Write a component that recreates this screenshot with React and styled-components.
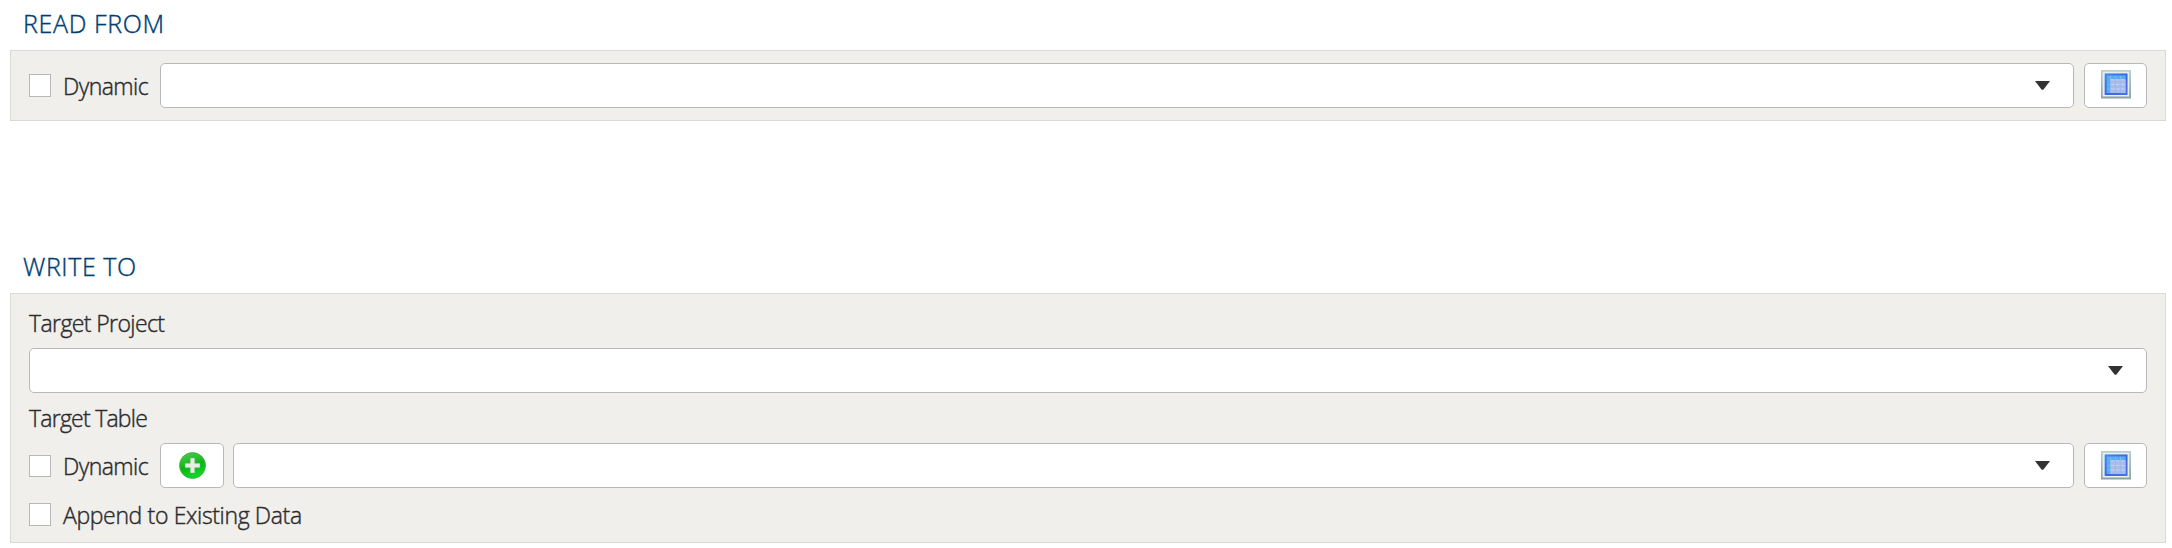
import React from "react";
import styled, { createGlobalStyle } from "styled-components";

const GlobalStyle = createGlobalStyle`
  * { box-sizing: border-box; }
  body { margin: 0; background: #fff; }
`;

const Page = styled.main`
  display: flex;
  flex-direction: column;
  width: 2172px;
  height: 548px;
  padding: 0 6px 0 10px;
  font-family: "Segoe UI", "Open Sans", "Noto Sans", sans-serif;
  font-weight: 300;
  -webkit-text-stroke-width: 0.4px;
  color: #2b2b2b;
`;

const Section = styled.section`
  display: flex;
  flex-direction: column;
  & + & { margin-top: 122px; }
`;

const Heading = styled.h2`
  height: 50px;
  margin: 0;
  padding-left: ${(p) => p.$indent}px;
  font-size: 25px;
  font-weight: 300;
  line-height: 46px;
  letter-spacing: ${(p) => p.$tracking}px;
  color: #003e73;
`;

const Panel = styled.div`
  display: flex;
  flex-direction: column;
  height: ${(p) => p.$height}px;
  padding: 12px 18px 0;
  border: 1px solid #d9d9d9;
  background: #f0efeb;
`;

const FieldLabel = styled.div`
  flex: none;
  height: ${(p) => p.$height}px;
  font-size: 23px;
  line-height: ${(p) => p.$line}px;
  letter-spacing: ${(p) => p.$tracking}px;
`;

const Row = styled.div`
  display: flex;
  flex: none;
  align-items: center;
  height: 45px;
`;

const OptionRow = styled(Row)`
  height: 41px;
  margin-top: 6px;
`;

const CheckLabel = styled.label`
  display: flex;
  flex: none;
  align-items: center;
  width: ${(p) => p.$width};
  gap: 12px;
  font-size: 23px;
  line-height: 42px;
  letter-spacing: ${(p) => p.$tracking}px;
  white-space: nowrap;
`;

const Checkbox = styled.input`
  appearance: none;
  width: 22px;
  height: ${(p) => p.$height || 23}px;
  margin: 0;
  border: 1px solid #b8b8b8;
  background: #fff;
`;

const Select = styled.div`
  display: flex;
  flex: 1;
  align-items: center;
  justify-content: flex-end;
  height: 45px;
  padding-right: 23px;
  border: 1px solid #b8b8b8;
  border-radius: 5px;
  background: #fff;
`;

const IconButton = styled.button`
  display: flex;
  flex: none;
  align-items: flex-start;
  justify-content: center;
  width: ${(p) => p.$width || 63}px;
  height: 45px;
  padding: ${(p) => p.$top}px 0 0;
  margin: ${(p) => p.$margin};
  border: 1px solid #b8b8b8;
  border-radius: 5px;
  background: #fff;
`;

const Arrow = () => (
  <svg width="15" height="9" viewBox="0 0 15 9">
    <path d="M0 0H15L8.5 8.4Q7.5 9.2 6.5 8.4Z" fill="#333" />
  </svg>
);

const TableIcon = () => (
  <svg width="30" height="29" viewBox="0 0 30 29">
    <defs>
      <linearGradient id="frame" x1="0" y1="0" x2="0" y2="1">
        <stop offset="0" stopColor="#b9cfca" />
        <stop offset="1" stopColor="#8da19f" />
      </linearGradient>
      <linearGradient id="edge" x1="0" y1="0" x2="1" y2="1">
        <stop offset="0" stopColor="#4285ee" />
        <stop offset="0.5" stopColor="#3f66e0" />
        <stop offset="1" stopColor="#4b6fee" />
      </linearGradient>
    </defs>
    <rect width="30" height="28.5" fill="url(#frame)" />
    <rect x="1.6" y="1.6" width="26.6" height="24.9" fill="#dfeceb" />
    <rect x="2.8" y="2.8" width="24.4" height="22.7" fill="#f5f9ff" />
    <rect x="3.6" y="3.4" width="23" height="21.6" fill="url(#edge)" />
    <rect x="5.6" y="5.4" width="19" height="17.6" fill="#55aef3" />
    <rect x="9.3" y="9.5" width="15.3" height="13.5" fill="#a9bbe7" />
    <path d="M9.5 9.8H24.6M9.5 14.4H24.6M9.5 19H24.6" stroke="#c6d5f3" strokeWidth="1" strokeDasharray="4 1" />
    <path d="M9.5 6V23M14.5 6V23M19.5 6V23" stroke="#98b9ec" strokeWidth="0.8" />
    <path d="M6 14.4H9.5M6 19H9.5" stroke="#6cc0f4" strokeWidth="0.8" />
  </svg>
);

const AddIcon = () => (
  <svg width="27" height="27" viewBox="0 0 27 27">
    <defs>
      <linearGradient id="green" x1="0" y1="0" x2="0.3" y2="1">
        <stop offset="0" stopColor="#55c954" />
        <stop offset="0.42" stopColor="#24bd29" />
        <stop offset="0.6" stopColor="#06b712" />
        <stop offset="1" stopColor="#13d526" />
      </linearGradient>
    </defs>
    <circle cx="13.5" cy="13.5" r="13" fill="url(#green)" stroke="#3cad3c" strokeWidth="0.8" />
    <path d="M11.2 6H15.8V11.2H21V15.8H15.8V21H11.2V15.8H6V11.2H11.2Z" fill="#e6ece6" stroke="#62b562" strokeWidth="0.5" />
  </svg>
);

export default function App() {
  return (
    <>
      <GlobalStyle />
      <Page>
        <Section>
          <Heading $indent={13} $tracking={0.65}>READ FROM</Heading>
          <Panel $height={71}>
            <Row>
              <CheckLabel $width="131px" $tracking={-0.55}>
                <Checkbox type="checkbox" />
                Dynamic
              </CheckLabel>
              <Select role="combobox"><Arrow /></Select>
              <IconButton $top={6} $margin="0 0 0 10px" aria-label="Browse tables"><TableIcon /></IconButton>
            </Row>
          </Panel>
        </Section>
        <Section>
          <Heading $indent={13} $tracking={0.58}>WRITE TO</Heading>
          <Panel $height={250}>
            <FieldLabel $height={42} $line={35} $tracking={-0.6}>Target Project</FieldLabel>
            <Row>
              <Select role="combobox"><Arrow /></Select>
            </Row>
            <FieldLabel $height={50} $line={50} $tracking={-0.76}>Target Table</FieldLabel>
            <Row>
              <CheckLabel $width="131px" $tracking={-0.55}>
                <Checkbox type="checkbox" $height={22} />
                Dynamic
              </CheckLabel>
              <IconButton $width={64} $top={8} $margin="0 9px 0 0" aria-label="Create table"><AddIcon /></IconButton>
              <Select role="combobox"><Arrow /></Select>
              <IconButton $top={7} $margin="0 0 0 10px" aria-label="Browse tables"><TableIcon /></IconButton>
            </Row>
            <OptionRow>
              <CheckLabel $width="auto" $tracking={-0.36}>
                <Checkbox type="checkbox" />
                Append to Existing Data
              </CheckLabel>
            </OptionRow>
          </Panel>
        </Section>
      </Page>
    </>
  );
}
